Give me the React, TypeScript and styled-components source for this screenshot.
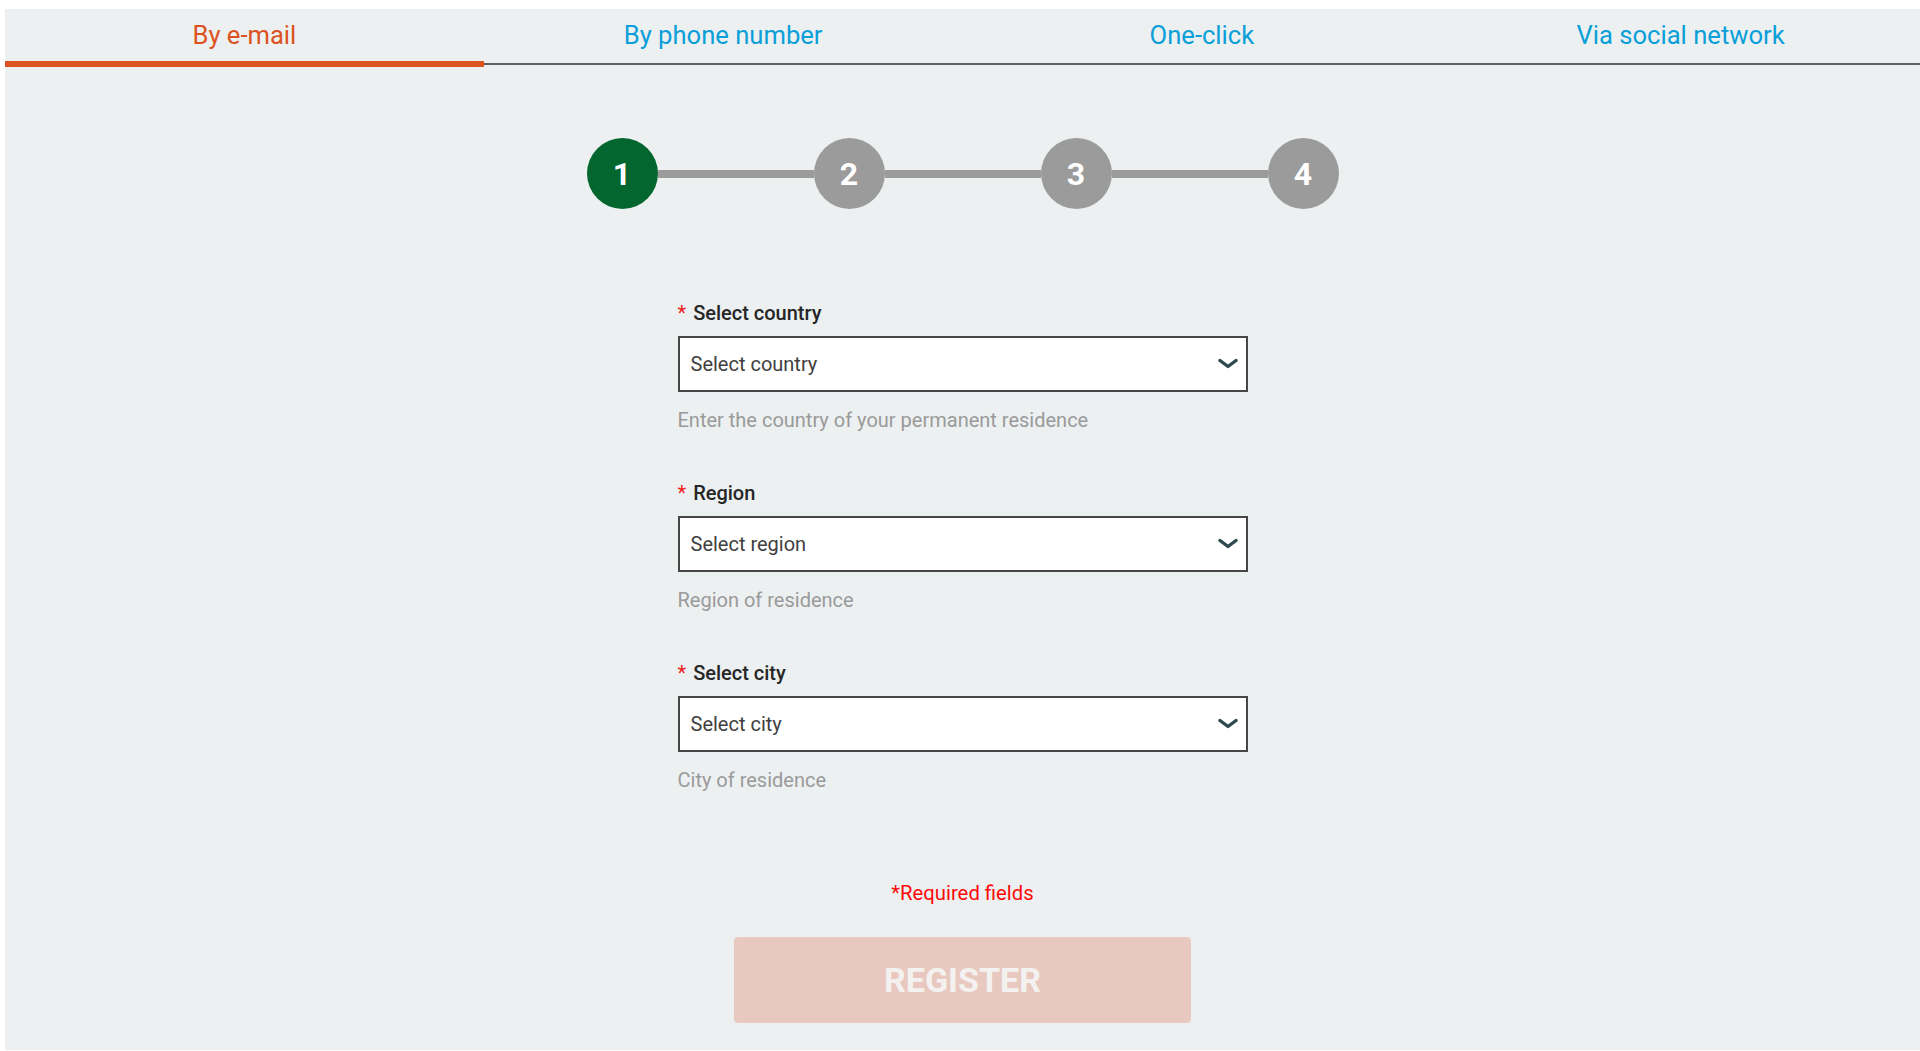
import React, { useState } from 'react';
import styled, { createGlobalStyle } from 'styled-components';

const GlobalStyle = createGlobalStyle`
    html, body {
        margin: 0;
        padding: 0;
        background: #ffffff;
    }
    body {
        font-family: Roboto, 'Liberation Sans', Arial, sans-serif;
    }
    #root {
        padding: 9px 0 1px 5px;
    }
`;

const Page = styled.div`
    background-color: #ecf0f1;
    min-height: 1041px;
    box-sizing: border-box;
`;

const TabBar = styled.nav`
    display: flex;
    height: 58px;
    background-image: linear-gradient(#5f5f5f, #5f5f5f);
    background-position: 0 54px;
    background-size: 100% 2px;
    background-repeat: no-repeat;
`;

const Tab = styled.button<{ $active?: boolean }>`
    flex: 1;
    height: 58px;
    padding: 0;
    border: none;
    border-bottom: 6px solid ${(p) => (p.$active ? '#dc5220' : 'transparent')};
    background: transparent;
    font-family: inherit;
    font-size: 25.6px;
    color: ${(p) => (p.$active ? '#dc5220' : '#0a9fd8')};
    cursor: pointer;
`;

const Stepper = styled.div`
    display: flex;
    justify-content: center;
    align-items: center;
    margin-top: 71px;
`;

const StepCircle = styled.div<{ $done?: boolean }>`
    width: 71px;
    height: 71px;
    border-radius: 50%;
    background-color: ${(p) => (p.$done ? '#03662f' : '#9b9b9b')};
    color: #ffffff;
    display: flex;
    align-items: center;
    justify-content: center;
    font-size: 32px;
    font-weight: 700;
`;

const StepLine = styled.div`
    width: 156px;
    height: 8px;
    background-color: #9b9b9b;
`;

const Form = styled.form`
    width: 570px;
    margin: 92px auto 0;
    display: flex;
    flex-direction: column;
    gap: 49px;
`;

const Field = styled.div`
    display: flex;
    flex-direction: column;
`;

const Label = styled.label`
    font-size: 20px;
    line-height: 24px;
    font-weight: 500;
    color: #262626;
    display: flex;
    gap: 7px;
`;

const Star = styled.span`
    color: #f0201a;
    font-weight: 400;
`;

const SelectBox = styled.div`
    margin-top: 11px;
    height: 56px;
    box-sizing: border-box;
    border: 2px solid #464646;
    background: #ffffff;
    display: flex;
    align-items: center;
    justify-content: space-between;
    padding: 0 8px 0 11px;
    font-size: 20px;
    color: #404040;
    cursor: pointer;
    svg {
        flex-shrink: 0;
    }
`;

const Help = styled.div`
    margin-top: 16px;
    font-size: 20px;
    line-height: 24px;
    color: #9a9a9a;
`;

const Footer = styled.div`
    display: flex;
    flex-direction: column;
    align-items: center;
    margin-top: 89px;
`;

const Required = styled.div`
    font-size: 20.3px;
    line-height: 24px;
    color: #ff0a0a;
`;

const RegisterButton = styled.button`
    margin-top: 32px;
    width: 457px;
    height: 86px;
    border: none;
    border-radius: 4px;
    background-color: #e8c8bf;
    color: #f3f2f1;
    font-family: inherit;
    font-size: 34px;
    font-weight: 700;
    cursor: not-allowed;
`;

const Chevron = () => (
    <svg width='20' height='12' viewBox='0 0 20 12'>
        <path d='M2 2.5 L10 8.5 L18 2.5' fill='none' stroke='#2e4a50' strokeWidth='3.4' strokeLinecap='round' strokeLinejoin='round' />
    </svg>
);

const tabs = ['By e-mail', 'By phone number', 'One-click', 'Via social network'];

const fields = [
    { label: 'Select country', placeholder: 'Select country', help: 'Enter the country of your permanent residence' },
    { label: 'Region', placeholder: 'Select region', help: 'Region of residence' },
    { label: 'Select city', placeholder: 'Select city', help: 'City of residence' },
];

export default function App() {
    const [activeTab, setActiveTab] = useState(0);
    const step = 1;

    return (
        <>
            <GlobalStyle />
            <Page>
                <TabBar>
                    {tabs.map((t, i) => (
                        <Tab key={t} $active={i === activeTab} onClick={() => setActiveTab(i)}>
                            {t}
                        </Tab>
                    ))}
                </TabBar>
                <Stepper>
                    {[1, 2, 3, 4].map((n) => (
                        <React.Fragment key={n}>
                            {n > 1 && <StepLine />}
                            <StepCircle $done={n <= step}>{n}</StepCircle>
                        </React.Fragment>
                    ))}
                </Stepper>
                <Form onSubmit={(e) => e.preventDefault()}>
                    {fields.map((f) => (
                        <Field key={f.label}>
                            <Label>
                                <Star>*</Star>
                                {f.label}
                            </Label>
                            <SelectBox>
                                <span>{f.placeholder}</span>
                                <Chevron />
                            </SelectBox>
                            <Help>{f.help}</Help>
                        </Field>
                    ))}
                </Form>
                <Footer>
                    <Required>*Required fields</Required>
                    <RegisterButton disabled>REGISTER</RegisterButton>
                </Footer>
            </Page>
        </>
    );
}
